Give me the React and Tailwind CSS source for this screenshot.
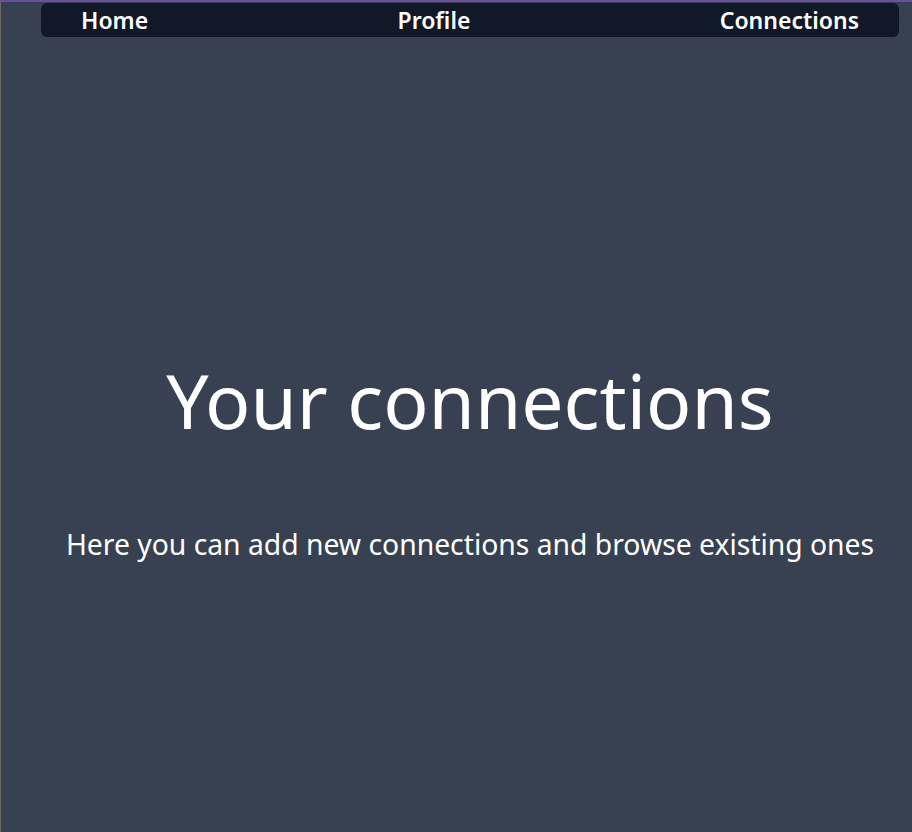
export default function App() {
  const links = ['Home', 'Profile', 'Connections']

  return (
    <div
      className="min-h-screen bg-[#374151] border-t-2 border-t-[#6b4f9e] border-l border-l-[#6b6b6b] text-white"
      style={{ fontFamily: '"Segoe UI", "Noto Sans", sans-serif' }}
    >
      <div className="w-[858px] ml-[40px] pt-px">
        {/* Nav */}
        <nav className="h-[34px] bg-[#111827] rounded-md flex items-center justify-between px-10">
          {links.map((l) => (
            <a key={l} href="#" className="text-[23px] font-semibold leading-none">
              {l}
            </a>
          ))}
        </nav>

        {/* Hero */}
        <div className="flex flex-col items-center pt-[326px]">
          <h1 className="text-[75px] font-normal leading-none">Your connections</h1>
          <p className="mt-[92px] text-[28.3px] leading-none">
            Here you can add new connections and browse existing ones
          </p>
        </div>
      </div>
    </div>
  )
}
